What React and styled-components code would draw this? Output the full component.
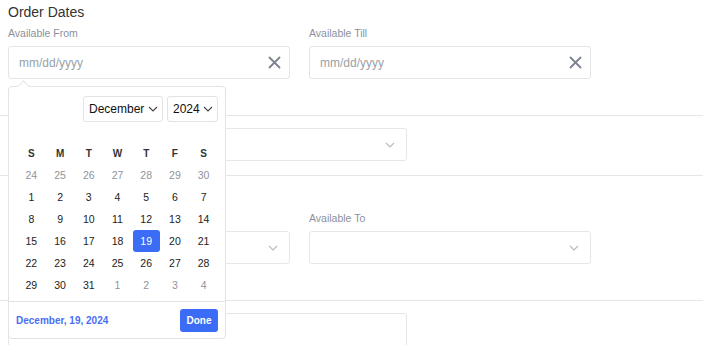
import React from "react";
import styled, { createGlobalStyle } from "styled-components";

const GlobalStyle = createGlobalStyle`
  html, body {
    margin: 0;
    padding: 0;
    background: #ffffff;
    font-family: "Liberation Sans", Arial, sans-serif;
    overflow: hidden;
  }
`;

const weeks = [
  [24, 25, 26, 27, 28, 29, 30],
  [1, 2, 3, 4, 5, 6, 7],
  [8, 9, 10, 11, 12, 13, 14],
  [15, 16, 17, 18, 19, 20, 21],
  [22, 23, 24, 25, 26, 27, 28],
  [29, 30, 31, 1, 2, 3, 4],
];

function CloseIcon() {
  return (
    <svg width="13" height="13" viewBox="0 0 13 13">
      <path d="M1.5 1.5 L11.5 11.5 M11.5 1.5 L1.5 11.5" stroke="#7c8290" strokeWidth="1.8" strokeLinecap="round" />
    </svg>
  );
}

function Chevron({ color = "#444", size = 10 }) {
  return (
    <svg width={size} height={size * 0.6} viewBox="0 0 10 6">
      <path d="M1 1 L5 5 L9 1" stroke={color} strokeWidth="1.1" fill="none" />
    </svg>
  );
}

function DateField({ label, children }) {
  return (
    <Field>
      <Label>{label}</Label>
      <DateInput>
        <Placeholder>mm/dd/yyyy</Placeholder>
        <CloseIcon />
      </DateInput>
      {children}
    </Field>
  );
}

function Calendar() {
  return (
    <Popover>
      <Arrow />
      <CalHeader>
        <MiniSelect $w={80}>
          December
          <Chevron />
        </MiniSelect>
        <MiniSelect $w={51}>
          2024
          <Chevron />
        </MiniSelect>
      </CalHeader>
      <DayGrid>
        {["S", "M", "T", "W", "T", "F", "S"].map((d, i) => (
          <DayName key={i}>{d}</DayName>
        ))}
        {weeks.map((w, wi) =>
          w.map((d, di) => {
            const muted = (wi === 0 && d > 20) || (wi === 5 && d < 10);
            return (
              <DayCell key={wi + "-" + di} $muted={muted} $selected={!muted && d === 19}>
                {d}
              </DayCell>
            );
          })
        )}
      </DayGrid>
      <CalFooter>
        <SelectedText>December, 19, 2024</SelectedText>
        <DoneButton>Done</DoneButton>
      </CalFooter>
    </Popover>
  );
}

export default function App() {
  return (
    <Page>
      <GlobalStyle />
      <Title>Order Dates</Title>
      <TwoCols $top={6}>
        <DateField label="Available From">
          <Calendar />
        </DateField>
        <DateField label="Available Till" />
      </TwoCols>
      <Divider $top={36} />
      <SelectBox $w={399}>
        <Chevron color="#b5b9bf" />
      </SelectBox>
      <Divider $top={14} />
      <TwoCols $top={24}>
        <Field>
          <Label $hidden>&nbsp;</Label>
          <SelectBox>
            <Chevron color="#b5b9bf" />
          </SelectBox>
        </Field>
        <Field>
          <Label>Available To</Label>
          <SelectBox>
            <Chevron color="#b5b9bf" />
          </SelectBox>
        </Field>
      </TwoCols>
      <Divider $top={36} />
      <TextBox />
    </Page>
  );
}

const Page = styled.div`
  position: relative;
  padding: 4px 8px 0;
  display: flex;
  flex-direction: column;

  & > * {
    flex-shrink: 0;
  }
`;

const Title = styled.div`
  font-size: 14px;
  line-height: 17px;
  color: #333;
`;

const TwoCols = styled.div`
  display: grid;
  grid-template-columns: 282px 282px;
  column-gap: 19px;
  margin-top: ${(p) => p.$top}px;
`;

const Field = styled.div`
  position: relative;
  display: flex;
  flex-direction: column;
`;

const Label = styled.div`
  font-size: 10.5px;
  line-height: 13px;
  color: #8b919c;
  margin-bottom: 6px;
  visibility: ${(p) => (p.$hidden ? "hidden" : "visible")};
`;

const DateInput = styled.div`
  height: 33px;
  box-sizing: border-box;
  border: 1px solid #e3e4e6;
  border-radius: 3px;
  display: flex;
  align-items: center;
  justify-content: space-between;
  padding: 0 8px 0 10px;
`;

const Placeholder = styled.span`
  font-size: 12px;
  color: #9a9fa8;
`;

const SelectBox = styled.div`
  width: ${(p) => (p.$w ? p.$w + "px" : "auto")};
  height: 33px;
  box-sizing: border-box;
  border: 1px solid #e6e7e9;
  border-radius: 3px;
  display: flex;
  align-items: center;
  justify-content: flex-end;
  padding-right: 11px;
`;

const Divider = styled.div`
  height: 1px;
  background: #e6e6e6;
  margin: ${(p) => p.$top}px -8px 12px;
`;

const TextBox = styled.div`
  width: 399px;
  height: 32px;
  box-sizing: border-box;
  border: 1px solid #e6e7e9;
  border-bottom: none;
  border-radius: 3px 3px 0 0;
`;

const Popover = styled.div`
  position: absolute;
  top: calc(100% + 7px);
  left: 0;
  z-index: 10;
  width: 218px;
  height: 253px;
  box-sizing: border-box;
  background: #fff;
  border: 1px solid #e3e3e3;
  border-radius: 4px;
  display: flex;
  flex-direction: column;
`;

const Arrow = styled.div`
  position: absolute;
  top: -5px;
  left: 10px;
  width: 8px;
  height: 8px;
  background: #fff;
  border-top: 1px solid #e3e3e3;
  border-left: 1px solid #e3e3e3;
  transform: rotate(45deg);
`;

const CalHeader = styled.div`
  display: flex;
  justify-content: flex-end;
  gap: 4px;
  padding: 9px 7px 0;
`;

const MiniSelect = styled.div`
  width: ${(p) => p.$w}px;
  height: 26px;
  box-sizing: border-box;
  border: 1px solid #e3e3e3;
  border-radius: 3px;
  display: flex;
  align-items: center;
  justify-content: space-between;
  padding: 0 4px 0 5px;
  font-size: 12px;
  color: #111;
`;

const DayGrid = styled.div`
  display: grid;
  grid-template-columns: repeat(7, 1fr);
  grid-auto-rows: 22px;
  padding: 20px 7px 0 8px;
`;

const DayName = styled.div`
  display: flex;
  align-items: center;
  justify-content: center;
  font-size: 10px;
  font-weight: bold;
  color: #333;
  margin-bottom: -1px;
`;

const DayCell = styled.div`
  display: flex;
  align-items: center;
  justify-content: center;
  margin: 0 1px;
  border-radius: 3px;
  font-size: 10.5px;
  color: ${(p) => (p.$selected ? "#fff" : p.$muted ? "#8e949e" : "#222")};
  background: ${(p) => (p.$selected ? "#3b6cf6" : "transparent")};
`;

const CalFooter = styled.div`
  margin-top: auto;
  height: 37px;
  box-sizing: border-box;
  border-top: 1px solid #e3e3e3;
  display: flex;
  align-items: center;
  justify-content: space-between;
  padding: 0 7px 0 7px;
`;

const SelectedText = styled.span`
  font-size: 10px;
  font-weight: bold;
  color: #4a6ef5;
`;

const DoneButton = styled.button`
  height: 23px;
  width: 38px;
  border: none;
  border-radius: 3px;
  background: #3b6cf6;
  color: #fff;
  font-family: "Liberation Sans", Arial, sans-serif;
  font-size: 10px;
  font-weight: bold;
  padding: 0;
`;
